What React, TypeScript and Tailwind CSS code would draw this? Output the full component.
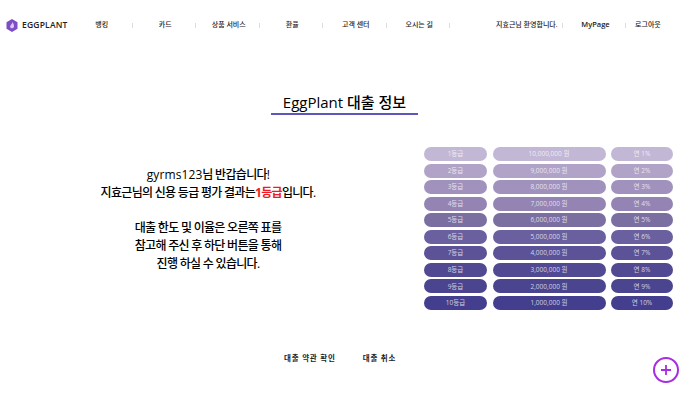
import React from 'react';

const navItems = ['뱅킹', '카드', '상품 서비스', '환율', '고객 센터', '오시는 길'];

const rates = [
  { grade: '1등급', limit: '10,000,000 원', rate: '연 1%', color: 'bg-[#c3b7d6]' },
  { grade: '2등급', limit: '9,000,000 원', rate: '연 2%', color: 'bg-[#b1a3c8]' },
  { grade: '3등급', limit: '8,000,000 원', rate: '연 3%', color: 'bg-[#a192bd]' },
  { grade: '4등급', limit: '7,000,000 원', rate: '연 4%', color: 'bg-[#9384b3]' },
  { grade: '5등급', limit: '6,000,000 원', rate: '연 5%', color: 'bg-[#7b6fa1]' },
  { grade: '6등급', limit: '5,000,000 원', rate: '연 6%', color: 'bg-[#6a5f9f]' },
  { grade: '7등급', limit: '4,000,000 원', rate: '연 7%', color: 'bg-[#5b5298]' },
  { grade: '8등급', limit: '3,000,000 원', rate: '연 8%', color: 'bg-[#514992]' },
  { grade: '9등급', limit: '2,000,000 원', rate: '연 9%', color: 'bg-[#4b458f]' },
  { grade: '10등급', limit: '1,000,000 원', rate: '연 10%', color: 'bg-[#433f8e]' },
];

const Logo = () => (
  <svg width="12" height="13" viewBox="0 0 12 13">
    <path d="M6 0 L11.5 3.2 V9.8 L6 13 L0.5 9.8 V3.2 Z" fill="#7c4dc4" />
    <path d="M6.4 3 C8 5.2 8.4 6.8 7.8 8.2 C7.3 9.4 5.4 9.8 4.5 8.8 C3.6 7.7 4.4 6.4 5.2 5.6 C5.8 5 6.3 4.2 6.4 3 Z" fill="#d9c8f2" />
  </svg>
);

const Pill = ({ text, color, width }: { text: string; color: string; width: string }) => (
  <div className={`${width} ${color} h-[14px] rounded-[7px] flex items-center justify-center text-[6.5px] text-white/75`}>
    {text}
  </div>
);

export default function App() {
  return (
    <div className="relative w-[692px] h-[420px] overflow-hidden bg-white text-black font-['Open_Sans','Noto_Sans_CJK_KR',sans-serif]">
      <header className="h-[50px] flex items-center pl-[6px]">
        <div className="w-[63px] flex items-center gap-[4px]">
          <Logo />
          <span className="text-[8.5px] font-semibold tracking-[0.2px] text-[#222]">EGGPLANT</span>
        </div>
        <nav className="flex items-center">
          {navItems.map((item) => (
            <div key={item} className="w-[63.5px] h-[5px] pl-[3px] flex items-center justify-center border-r border-[#ddd] text-[7px] font-medium text-[#222]">
              {item}
            </div>
          ))}
        </nav>
        <div className="ml-[46px] h-[5px] w-[67px] flex items-center border-r border-[#ddd] text-[7px] font-medium text-[#222] whitespace-nowrap">
          지효근님 환영합니다.
        </div>
        <div className="h-[5px] w-[63px] pl-[3px] flex items-center justify-center border-r border-[#ddd] text-[7.5px] font-semibold text-[#222]">
          MyPage
        </div>
        <div className="pl-[9px] text-[7px] font-medium text-[#222]">로그아웃</div>
      </header>

      <div className="pt-[42px] pr-[3px] flex justify-center">
        <h1 className="w-[147px] h-[23px] border-b-2 border-[#5a58bd] text-center text-[15px] leading-[20px] font-medium whitespace-nowrap">
          EggPlant 대출 정보
        </h1>
      </div>

      <main className="pt-[32px] flex">
        <div className="w-[416px] pt-[19px] text-center text-[12px] tracking-[-0.7px] leading-[17.7px] font-medium">
          <p>
            <span className="tracking-[0.1px]">gyrms123</span>님 반갑습니다!
          </p>
          <p>
            지효근님의 신용 등급 평가 결과는<span className="font-bold text-[#ee1c25]">1등급</span>입니다.
          </p>
          <p className="mt-[17.7px]">대출 한도 및 이율은 오른쪽 표를</p>
          <p>참고해 주신 후 하단 버튼을 통해</p>
          <p>진행 하실 수 있습니다.</p>
        </div>
        <div className="ml-[8px] flex flex-col gap-[2.55px]">
          {rates.map((row) => (
            <div key={row.grade} className="flex gap-[5.5px]">
              <Pill text={row.grade} color={row.color} width="w-[63px]" />
              <Pill text={row.limit} color={row.color} width="w-[113px]" />
              <Pill text={row.rate} color={row.color} width="w-[62px]" />
            </div>
          ))}
        </div>
      </main>

      <div className="pt-[43px] pl-[284px] flex gap-[27px] text-[7.5px] font-bold tracking-[0.8px] text-[#222]">
        <span>대출 약관 확인</span>
        <span>대출 취소</span>
      </div>

      <button className="absolute left-[653px] top-[357px] w-[26px] h-[26px] rounded-full border-[2.5px] border-[#a72de0] flex items-center justify-center">
        <svg width="12" height="12" viewBox="0 0 12 12">
          <path d="M6 1 V11 M1 6 H11" stroke="#a72de0" strokeWidth="1.8" />
        </svg>
      </button>
    </div>
  );
}
